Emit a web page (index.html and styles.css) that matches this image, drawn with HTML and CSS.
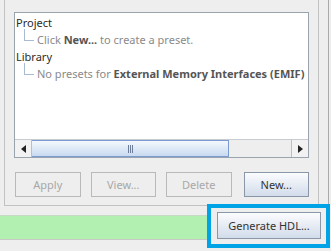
FILE: index.html
```html
<!DOCTYPE html>
<html>
<head>
<meta charset="utf-8">
<link rel="stylesheet" href="styles.css">
</head>
<body>
<div class="frame">
<div class="panel">
  <div class="list">
    <div class="tree">
      <div class="row">Project</div>
      <div class="row child"><span class="elbow"></span><span class="muted">Click <b>New...</b> to create a preset.</span></div>
      <div class="row">Library</div>
      <div class="row child"><span class="elbow"></span><span class="muted">No presets for <b>External Memory Interfaces (EMIF)</b></span></div>
    </div>
    <div class="hscroll">
      <div class="arrow left"><svg width="5" height="8" viewBox="0 0 5 8"><path d="M5 0 L0 4 L5 8 Z" fill="#222"/></svg></div>
      <div class="track">
        <div class="thumb"><span class="grip"></span></div>
      </div>
      <div class="arrow right"><svg width="5" height="8" viewBox="0 0 5 8"><path d="M0 0 L5 4 L0 8 Z" fill="#222"/></svg></div>
    </div>
  </div>
  <div class="buttons">
    <button class="btn" disabled>Apply</button>
    <button class="btn" disabled>View...</button>
    <button class="btn" disabled>Delete</button>
    <button class="btn primary">New...</button>
  </div>
</div>
</div>
<div class="footer">
  <div class="status"></div>
  <div class="highlight"><button class="btn primary gen">Generate HDL...</button></div>
</div>
</body>
</html>
```
FILE: styles.css
```css
* { box-sizing: border-box; }
html, body { margin: 0; padding: 0; }
body {
  width: 331px;
  height: 251px;
  background: #eeeeee;
  font-family: "Noto Sans", "DejaVu Sans", sans-serif;
  font-size: 11px;
  color: #333;
  overflow: hidden;
}
.frame {
  width: 329px;
  height: 206px;
  border-right: 1px solid #a9a9a9;
}
.panel {
  margin-left: 4px;
  width: 315px;
  height: 206px;
  border: 1px solid #c2c2c2;
  border-top: none;
  padding: 12px 9px 0 9px;
  display: flex;
  flex-direction: column;
}
.list {
  height: 146px;
  border: 1px solid #9aa4ae;
  background: #fff;
  display: flex;
  flex-direction: column;
}
.tree {
  flex: 1;
  padding-top: 1px;
}
.row {
  height: 17px;
  line-height: 17px;
  padding-left: 1px;
  white-space: nowrap;
  display: flex;
  align-items: center;
  color: #2a2a2a;
}
.row.child { padding-left: 9px; }
.elbow {
  width: 10px;
  height: 17px;
  margin-right: 3px;
  position: relative;
  flex: none;
}
.elbow::before {
  content: "";
  position: absolute;
  left: 0;
  top: -2px;
  height: 11px;
  width: 1px;
  background: #aabbd4;
}
.elbow::after {
  content: "";
  position: absolute;
  left: 0;
  top: 9px;
  width: 10px;
  height: 1px;
  background: #aabbd4;
}
.muted { color: #8a8a8a; }
.muted b { color: #555; font-weight: bold; }
.hscroll {
  height: 18px;
  display: flex;
  border-top: 1px solid #c8ccd0;
  background: #eeeeee;
}
.arrow {
  width: 17px;
  flex: none;
  display: flex;
  align-items: center;
  justify-content: center;
  background: #f2f2f2;
}
.arrow.left { border-right: 1px solid #b8c0c8; }
.arrow.right { border-left: 1px solid #b8c0c8; }
.track { flex: 1; display: flex; }
.thumb {
  width: 197px;
  border: 1px solid #7c9cd0;
  border-left: none;
  background: linear-gradient(#f4f8fd, #c8daf0);
  display: flex;
  align-items: center;
  justify-content: center;
}
.grip {
  width: 5px;
  height: 8px;
  border-left: 1px solid #6b7d99;
  border-right: 1px solid #6b7d99;
  position: relative;
}
.grip::after {
  content: "";
  position: absolute;
  left: 1px;
  top: 0;
  width: 1px;
  height: 8px;
  background: #6b7d99;
}
.buttons {
  display: flex;
  margin-top: 14px;
  padding-left: 1px;
  gap: 10px;
}
.btn {
  width: 67px;
  height: 25px;
  font-family: "Noto Sans", "DejaVu Sans", sans-serif;
  font-size: 11px;
  border: 1px solid #b9b9b9;
  border-radius: 0;
  background: #eeeeee;
  color: #a8a8a8;
  padding: 0;
}
.btn.primary {
  color: #333;
  border-color: #8a97a8;
  background: linear-gradient(#fbfcfe, #d2dcea);
  margin-left: 2px;
}
.footer {
  display: flex;
  align-items: center;
}
.status {
  flex: 1;
  height: 25px;
  background: #b2f0b1;
  border-top: 1px solid #c6d8c6;
  border-bottom: 1px solid #c8c8c8;
}
.highlight {
  margin-top: -2px;
  margin-right: 1px;
  width: 123px;
  height: 44px;
  border: 4px solid #00a3e6;
  background: #eeeeee;
  padding: 4px 5px 5px 6px;
}
.btn.gen {
  width: 104px;
  height: 27px;
  margin: 0;
  font-size: 11px;
}
```
